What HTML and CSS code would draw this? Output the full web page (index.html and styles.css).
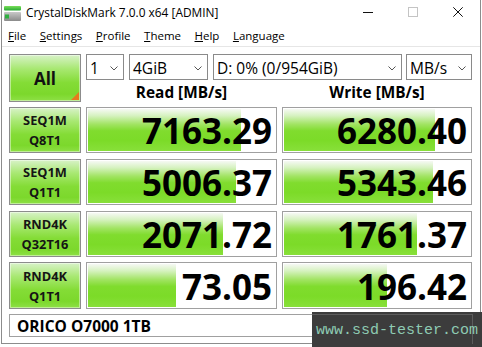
FILE: index.html
```html
<!DOCTYPE html>
<html>
<head>
<meta charset="utf-8">
<title>CrystalDiskMark</title>
<link rel="stylesheet" href="styles.css">
</head>
<body>
<div class="window">
  <div class="titlebar">
    <svg class="app-icon" width="17" height="15" viewBox="0 0 17 15">
      <defs>
        <linearGradient id="gtop" x1="0" y1="0" x2="0" y2="1">
          <stop offset="0" stop-color="#7be05a"/>
          <stop offset="1" stop-color="#27a834"/>
        </linearGradient>
        <linearGradient id="gbody" x1="0" y1="0" x2="0" y2="1">
          <stop offset="0" stop-color="#c8c8c8"/>
          <stop offset="1" stop-color="#8a8a8a"/>
        </linearGradient>
      </defs>
      <rect x="0" y="0" width="17" height="4.5" rx="1" fill="url(#gtop)"/>
      <rect x="0" y="6" width="17" height="9" rx="1" fill="url(#gbody)"/>
      <rect x="1" y="8.5" width="4" height="4" fill="#2fb040"/>
    </svg>
    <span class="title">CrystalDiskMark 7.0.0 x64 [ADMIN]</span>
    <div class="controls">
      <span class="ctl"><svg width="10" height="10" viewBox="0 0 10 10"><line x1="0" y1="5.5" x2="10" y2="5.5" stroke="#111" stroke-width="1"/></svg></span>
      <span class="ctl"><svg width="10" height="10" viewBox="0 0 10 10"><rect x="0.5" y="0.5" width="9" height="9" fill="none" stroke="#c4c4c4" stroke-width="1"/></svg></span>
      <span class="ctl"><svg width="10" height="10" viewBox="0 0 10 10"><path d="M0.3 0.3 L9.7 9.7 M9.7 0.3 L0.3 9.7" stroke="#111" stroke-width="1"/></svg></span>
    </div>
  </div>
  <div class="menubar">
    <span class="mi"><u>F</u>ile</span>
    <span class="mi"><u>S</u>ettings</span>
    <span class="mi"><u>P</u>rofile</span>
    <span class="mi"><u>T</u>heme</span>
    <span class="mi"><u>H</u>elp</span>
    <span class="mi"><u>L</u>anguage</span>
  </div>
  <div class="panel">
    <div class="grid top">
      <div class="btn-all"><span>All</span><i class="corner"></i></div>
      <div class="combos">
        <div class="combo c-count"><span>1</span><svg class="chev" width="8" height="5" viewBox="0 0 8 5"><polyline points="0.5,0.5 4,4 7.5,0.5" fill="none" stroke="#555" stroke-width="1"/></svg></div>
        <div class="combo c-size"><span>4GiB</span><svg class="chev" width="8" height="5" viewBox="0 0 8 5"><polyline points="0.5,0.5 4,4 7.5,0.5" fill="none" stroke="#555" stroke-width="1"/></svg></div>
        <div class="combo c-drive"><span>D: 0% (0/954GiB)</span><svg class="chev" width="8" height="5" viewBox="0 0 8 5"><polyline points="0.5,0.5 4,4 7.5,0.5" fill="none" stroke="#555" stroke-width="1"/></svg></div>
        <div class="combo c-unit"><span>MB/s</span><svg class="chev" width="8" height="5" viewBox="0 0 8 5"><polyline points="0.5,0.5 4,4 7.5,0.5" fill="none" stroke="#555" stroke-width="1"/></svg></div>
      </div>
      <div class="hdr">Read [MB/s]</div>
      <div class="hdr">Write [MB/s]</div>
    </div>

    <div class="grid row r1">
      <div class="label"><span>SEQ1M</span><span>Q8T1</span></div>
      <div class="value"><i class="bar" style="width:153px"></i><span class="num">7163.29</span></div>
      <div class="value"><i class="bar" style="width:151px"></i><span class="num">6280.40</span></div>
    </div>
    <div class="grid row r2">
      <div class="label"><span>SEQ1M</span><span>Q1T1</span></div>
      <div class="value"><i class="bar" style="width:148px"></i><span class="num">5006.37</span></div>
      <div class="value"><i class="bar" style="width:149px"></i><span class="num">5343.46</span></div>
    </div>
    <div class="grid row r3">
      <div class="label"><span>RND4K</span><span>Q32T16</span></div>
      <div class="value"><i class="bar" style="width:135px"></i><span class="num">2071.72</span></div>
      <div class="value"><i class="bar" style="width:133px"></i><span class="num">1761.37</span></div>
    </div>
    <div class="grid row r4">
      <div class="label"><span>RND4K</span><span>Q1T1</span></div>
      <div class="value"><i class="bar" style="width:88px"></i><span class="num">73.05</span></div>
      <div class="value"><i class="bar" style="width:103px"></i><span class="num">196.42</span></div>
    </div>

    <div class="name">ORICO O7000 1TB</div>
  </div>
</div>
<div class="watermark"><i class="wm-frame"></i><span class="wm-text">www.ssd-tester.com</span></div>
</body>
</html>
```

FILE: styles.css
```css
html, body {
  margin: 0;
  padding: 0;
}
body {
  width: 482px;
  height: 347px;
  overflow: hidden;
  position: relative;
  background: #ffffff;
  font-family: "Open Sans", "Noto Sans", sans-serif;
  color: #000;
}
.window {
  margin-left: 1px;
  width: 478px;
  height: 343px;
  border: 1px solid #8c8c8c;
  border-top: none;
  background: #ffffff;
}
.titlebar {
  height: 24px;
  display: flex;
  align-items: center;
  padding-left: 2px;
  font-size: 11.9px;
}
.app-icon {
  margin-right: 5px;
  margin-top: 2px;
}
.title {
  white-space: nowrap;
}
.controls {
  margin-left: auto;
  display: flex;
  height: 24px;
}
.ctl {
  width: 45px;
  display: flex;
  align-items: center;
  justify-content: center;
}
.menubar {
  height: 22px;
  display: flex;
  align-items: center;
  gap: 13.5px;
  padding-left: 6px;
  font-size: 11.5px;
  border-bottom: 1px solid #e6e6e6;
}
.mi u {
  text-underline-offset: 1px;
}
.panel {
  padding: 7px 0 0 7px;
}
.grid {
  display: grid;
  grid-template-columns: 72px 191px 190px;
  column-gap: 5px;
}
.top {
  grid-template-rows: 26px 22px;
}
.btn-all {
  grid-row: 1 / 3;
  position: relative;
  border: 1px solid #8c8c8c;
  box-sizing: border-box;
  display: flex;
  align-items: center;
  justify-content: center;
  font-weight: 700;
  font-size: 17px;
  color: #111;
  background: linear-gradient(to bottom, #d8f2c8 0%, #a8e872 30%, #84dc36 60%, #7cd82c 85%, #8ee046 100%);
  box-shadow: inset 0 0 0 1px rgba(255, 255, 255, 0.45);
}
.corner {
  position: absolute;
  right: 1px;
  bottom: 1px;
  width: 0;
  height: 0;
  border-left: 8px solid transparent;
  border-bottom: 8px solid #e67a1e;
}
.combos {
  grid-column: 2 / 4;
  display: flex;
}
.combo {
  box-sizing: border-box;
  height: 26px;
  border: 1px solid #8a8a8a;
  display: flex;
  align-items: center;
  padding: 2px 5px 0 3px;
  font-size: 15.5px;
  margin-right: 5px;
}
.combo span {
  flex: 1;
  white-space: nowrap;
}
.chev {
  flex: none;
}
.c-count { width: 38px; }
.c-size { width: 79px; }
.c-drive { width: 189px; margin-right: 4px; }
.c-unit { width: 66px; margin-right: 0; }
.hdr {
  display: flex;
  align-items: center;
  justify-content: center;
  font-weight: 700;
  font-size: 15.4px;
  padding-top: 2px;
}
.row {
  height: 46px;
  margin-top: 6px;
}
.r1 { margin-top: 5px; }
.r4 { margin-top: 5px; height: 47px; }
.label {
  box-sizing: border-box;
  border: 1px solid #8c8c8c;
  display: flex;
  flex-direction: column;
  align-items: center;
  justify-content: center;
  font-weight: 700;
  font-size: 12.8px;
  line-height: 20px;
  color: #151515;
  background: linear-gradient(to bottom, #d8f2c8 0%, #a8e872 30%, #84dc36 60%, #7cd82c 85%, #8ee046 100%);
  box-shadow: inset 0 0 0 1px rgba(255, 255, 255, 0.45);
}
.value {
  position: relative;
  box-sizing: border-box;
  border: 1px solid #a0a0a0;
  background: #ffffff;
  display: flex;
  align-items: center;
  justify-content: flex-end;
  padding-right: 4px;
  overflow: hidden;
}
.bar {
  position: absolute;
  left: 1px;
  top: 1px;
  bottom: 1px;
  background: linear-gradient(to bottom, #f6f9f4 0%, #d6f2c0 16%, #a2e464 36%, #80dc2e 52%, #7cdb28 75%, #88e03a 100%);
}
.num {
  position: relative;
  font-weight: 700;
  font-size: 35px;
  line-height: 1;
  padding-top: 1px;
}
.name {
  box-sizing: border-box;
  margin-top: 5px;
  width: 463px;
  height: 23px;
  border: 1px solid #a0a0a0;
  display: flex;
  align-items: center;
  padding-left: 7px;
  font-weight: 700;
  font-size: 15.5px;
}
.watermark {
  position: absolute;
  left: 312px;
  top: 312px;
  width: 170px;
  height: 35px;
  background: #3c3c3c;
}
.wm-frame {
  position: absolute;
  left: 0;
  top: 2px;
  width: 160px;
  height: 29px;
  border-top: 1px solid #5c5c5c;
  border-right: 1px solid #5c5c5c;
}
.wm-text {
  position: absolute;
  left: 4px;
  top: 11px;
  font-family: "Liberation Mono", monospace;
  font-size: 15px;
  line-height: 15px;
  color: #8ecbb3;
  white-space: nowrap;
}
```
